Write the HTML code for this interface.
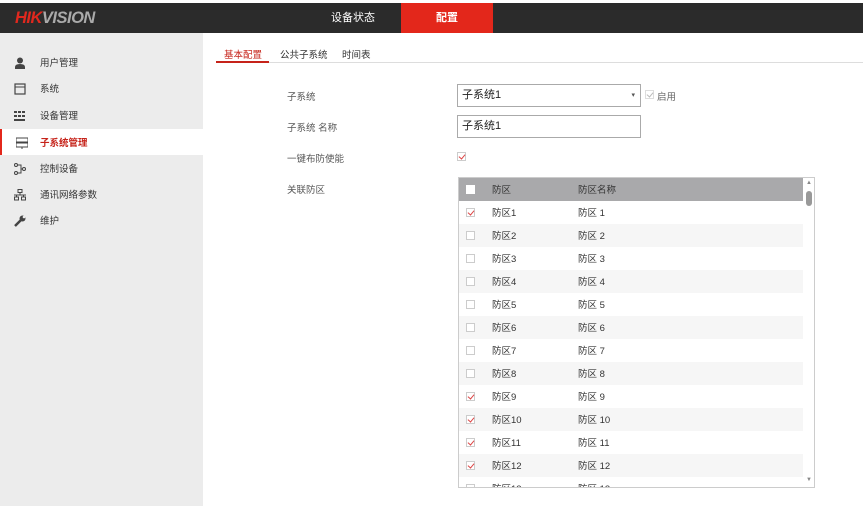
<!DOCTYPE html>
<html><head><meta charset="utf-8"><style>
*{margin:0;padding:0;box-sizing:border-box}
body{width:863px;height:506px;overflow:hidden;background:#fff;font-family:"Liberation Sans","Noto Sans CJK SC",sans-serif;font-size:9.5px;color:#333;position:relative}
.top{position:absolute;left:0;top:3px;width:863px;height:30px;background:#2b2b2b}
.logo{position:absolute;left:15px;top:6px;font-size:16.5px;font-weight:bold;font-style:italic;letter-spacing:-0.5px;color:#aaa}
.logo b{color:#e0281e}
.nav1{position:absolute;left:331px;top:6px;color:#fff;font-size:11px}
.nav2{position:absolute;left:401px;top:0;width:92px;height:30px;background:#e3271b;color:#fff;font-size:11px;text-align:center;line-height:30px;font-weight:bold}
.side{position:absolute;left:0;top:33px;width:203px;height:473px;background:#ececec}
.item{position:absolute;left:0;width:203px;height:26px;line-height:29px;padding-left:40px;font-size:9.5px;color:#333}
.item.act{background:#fff;border-left:2px solid #e3271b;color:#c6231a;font-weight:bold;padding-left:38px}
.ic{position:absolute;left:14px;top:8px;width:12px;height:12px}
.tabs{position:absolute;left:216px;top:44px;width:647px;height:19px;border-bottom:1px solid #ddd}
.tab{position:absolute;top:3px;font-size:9.5px;color:#333}
.lbl{position:absolute;left:287px;font-size:9.5px;color:#555}
.inp{position:absolute;left:457px;width:184px;height:23px;border:1px solid #aaa;font-size:11px;line-height:21px;padding-left:4px;color:#222}
.cb{position:absolute;width:9px;height:9px;border:1px solid #ccc;background:#fff}
.cb.on::after{content:"";position:absolute;left:2px;top:0px;width:3px;height:5px;border:solid #d44;border-width:0 1px 1px 0;transform:rotate(40deg)}
.cb.dis::after{border-color:#bbb}
.tbl{position:absolute;left:458px;top:177px;width:357px;height:311px;border:1px solid #ccc;overflow:hidden}
.hd{position:absolute;left:0;top:0;width:344px;height:23px;background:#a9a9ab}
.row{position:absolute;left:0;width:344px;height:23px}
.row.alt{background:#f6f6f6}
.c1{position:absolute;left:33px;top:4px}
.c2{position:absolute;left:119px;top:4px}
.sb{position:absolute;left:344px;top:0;width:12px;height:311px;background:#fff}
</style></head><body>
<div class="top">
<div class="logo"><b>HIK</b>VISION</div>
<div class="nav1">设备状态</div>
<div class="nav2">配置</div>
</div>
<div class="side">
<div class="item" style="top:16px"><svg class="ic" viewBox="0 0 12 12"><circle cx="6" cy="3.5" r="3" fill="#444"/><path d="M1 12v-2q0-3 5-3t5 3v2z" fill="#444"/></svg>用户管理</div>
<div class="item" style="top:42px"><svg class="ic" viewBox="0 0 12 12"><rect x="1" y="1" width="10" height="10" fill="none" stroke="#444" stroke-width="1.2"/><path d="M1 4h10" stroke="#444"/></svg>系统</div>
<div class="item" style="top:69px"><svg class="ic" viewBox="0 0 12 12" fill="#444"><rect x="0" y="1" width="3" height="2"/><rect x="4" y="1" width="3" height="2"/><rect x="8" y="1" width="3" height="2"/><rect x="0" y="5" width="3" height="2"/><rect x="4" y="5" width="3" height="2"/><rect x="8" y="5" width="3" height="2"/><rect x="0" y="9" width="11" height="2"/></svg>设备管理</div>
<div class="item act" style="top:96px"><svg class="ic" viewBox="0 0 12 12"><rect x="0" y="1" width="12" height="4" fill="none" stroke="#444"/><rect x="0" y="6" width="12" height="4" fill="none" stroke="#444"/><path d="M6 10v2" stroke="#444"/></svg>子系统管理</div>
<div class="item" style="top:122px"><svg class="ic" viewBox="0 0 12 12" fill="none" stroke="#444"><circle cx="2" cy="2" r="1.5"/><circle cx="10" cy="6" r="1.5"/><circle cx="2" cy="10" r="1.5"/><path d="M3.5 2H7v8H3.5M7 6h1.5"/></svg>控制设备</div>
<div class="item" style="top:148px"><svg class="ic" viewBox="0 0 12 12" fill="none" stroke="#444"><rect x="4" y="0.5" width="4" height="3"/><rect x="0.5" y="8" width="4" height="3"/><rect x="7.5" y="8" width="4" height="3"/><path d="M6 3.5V6M0 6h12M2.5 6v2M9.5 6v2"/></svg>通讯网络参数</div>
<div class="item" style="top:174px"><svg class="ic" viewBox="0 0 12 12"><path d="M1 11l6-6" stroke="#444" stroke-width="2.5"/><circle cx="8.5" cy="3.5" r="3" fill="#444"/><circle cx="10" cy="2" r="1.3" fill="#ececec"/></svg>维护</div>
</div>
<div class="tabs">
<div class="tab" style="left:8px;color:#c6231a">基本配置</div>
<div style="position:absolute;left:0;top:17px;width:53px;height:2px;background:#c6231a"></div>
<div class="tab" style="left:64px">公共子系统</div>
<div class="tab" style="left:126px">时间表</div>
</div>
<div class="lbl" style="top:89px">子系统</div>
<div class="lbl" style="top:120px">子系统 名称</div>
<div class="lbl" style="top:151px">一键布防使能</div>
<div class="lbl" style="top:182px">关联防区</div>
<div class="inp" style="top:84px">子系统1<span style="position:absolute;right:5px;top:0;font-size:7px;color:#555">▾</span></div>
<div class="cb on dis" style="left:645px;top:90px;border-color:#ddd"></div>
<div style="position:absolute;left:657px;top:89px;color:#666">启用</div>
<div class="inp" style="top:115px">子系统1</div>
<div class="cb on" style="left:457px;top:152px"></div>
<div class="tbl">
<div class="hd"><div class="cb" style="left:7px;top:7px;border-color:#fff"></div><div class="c1">防区</div><div class="c2">防区名称</div></div>
<div class="row" style="top:23px"><div class="cb on" style="left:7px;top:7px"></div><div class="c1">防区1</div><div class="c2">防区 1</div></div>
<div class="row alt" style="top:46px"><div class="cb" style="left:7px;top:7px"></div><div class="c1">防区2</div><div class="c2">防区 2</div></div>
<div class="row" style="top:69px"><div class="cb" style="left:7px;top:7px"></div><div class="c1">防区3</div><div class="c2">防区 3</div></div>
<div class="row alt" style="top:92px"><div class="cb" style="left:7px;top:7px"></div><div class="c1">防区4</div><div class="c2">防区 4</div></div>
<div class="row" style="top:115px"><div class="cb" style="left:7px;top:7px"></div><div class="c1">防区5</div><div class="c2">防区 5</div></div>
<div class="row alt" style="top:138px"><div class="cb" style="left:7px;top:7px"></div><div class="c1">防区6</div><div class="c2">防区 6</div></div>
<div class="row" style="top:161px"><div class="cb" style="left:7px;top:7px"></div><div class="c1">防区7</div><div class="c2">防区 7</div></div>
<div class="row alt" style="top:184px"><div class="cb" style="left:7px;top:7px"></div><div class="c1">防区8</div><div class="c2">防区 8</div></div>
<div class="row" style="top:207px"><div class="cb on" style="left:7px;top:7px"></div><div class="c1">防区9</div><div class="c2">防区 9</div></div>
<div class="row alt" style="top:230px"><div class="cb on" style="left:7px;top:7px"></div><div class="c1">防区10</div><div class="c2">防区 10</div></div>
<div class="row" style="top:253px"><div class="cb on" style="left:7px;top:7px"></div><div class="c1">防区11</div><div class="c2">防区 11</div></div>
<div class="row alt" style="top:276px"><div class="cb on" style="left:7px;top:7px"></div><div class="c1">防区12</div><div class="c2">防区 12</div></div>
<div class="row" style="top:299px"><div class="cb" style="left:7px;top:7px"></div><div class="c1">防区13</div><div class="c2">防区 13</div></div>
<div class="sb"><div style="position:absolute;left:3px;top:2px;font-size:6px;color:#888">▲</div><div style="position:absolute;left:3px;top:13px;width:6px;height:15px;border-radius:3px;background:#999"></div><div style="position:absolute;left:3px;top:299px;font-size:6px;color:#888">▼</div></div>
</div>
</body></html>
